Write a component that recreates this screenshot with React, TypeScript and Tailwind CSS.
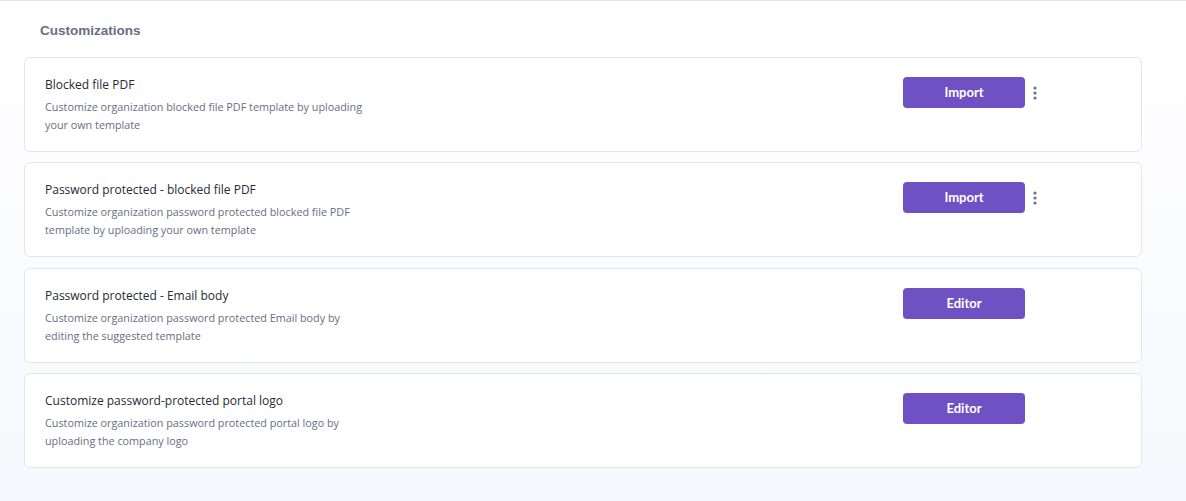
import { useState } from 'react'

type Customization = {
  title: string
  description: string
  action: 'Import' | 'Editor'
  menu: boolean
}

const items: Customization[] = [
  {
    title: 'Blocked file PDF',
    description: 'Customize organization blocked file PDF template by uploading your own template',
    action: 'Import',
    menu: true,
  },
  {
    title: 'Password protected - blocked file PDF',
    description: 'Customize organization password protected blocked file PDF template by uploading your own template',
    action: 'Import',
    menu: true,
  },
  {
    title: 'Password protected - Email body',
    description: 'Customize organization password protected Email body by editing the suggested template',
    action: 'Editor',
    menu: false,
  },
  {
    title: 'Customize password-protected portal logo',
    description: 'Customize organization password protected portal logo by uploading the company logo',
    action: 'Editor',
    menu: false,
  },
]

function KebabIcon() {
  return (
    <svg width="4" height="14" viewBox="0 0 4 14" className="fill-[#6b7287]">
      <circle cx="2" cy="2" r="1.6" />
      <circle cx="2" cy="7" r="1.6" />
      <circle cx="2" cy="12" r="1.6" />
    </svg>
  )
}

function CustomizationCard({ item }: { item: Customization }) {
  const [pressed, setPressed] = useState(false)

  return (
    <div className="flex items-start justify-between h-[95px] rounded-md border border-[#e3e6ee] bg-white pl-5 pr-[104px] pt-[19px]">
      <div className="flex flex-col">
        <h3 className="text-[12px] leading-[16px] text-[#272a33] font-['Open_Sans',sans-serif]">{item.title}</h3>
        <p className="mt-[5px] w-[322px] text-[10.8px] leading-[18px] text-[#676e83] font-['Open_Sans',sans-serif]">
          {item.description}
        </p>
      </div>
      <div className="flex items-center gap-[8px]">
        <button
          type="button"
          onClick={() => setPressed(!pressed)}
          className="h-[31px] w-[122px] rounded-[4px] bg-[#6f51c4] text-[13px] font-bold text-white font-['Lato','Open_Sans',sans-serif]"
        >
          {item.action}
        </button>
        <div className={`w-[4px] flex justify-center ${item.menu ? '' : 'invisible'}`}>
          <KebabIcon />
        </div>
      </div>
    </div>
  )
}

export default function App() {
  return (
    <div className="min-h-[501px] w-[1186px] border-t border-[#e4e6ec] bg-gradient-to-b from-white to-[#f7f8fd]">
      <div className="w-[1142px] pb-[33px]">
        <h2 className="pl-10 pt-[21px] pb-[17px] text-[13.5px] leading-[18px] font-bold text-[#676e84] font-['Liberation_Sans',Arial,sans-serif]">
          Customizations
        </h2>
        <div className="flex flex-col gap-[10.4px] pl-6">
          {items.map((item) => (
            <CustomizationCard key={item.title} item={item} />
          ))}
        </div>
      </div>
    </div>
  )
}
